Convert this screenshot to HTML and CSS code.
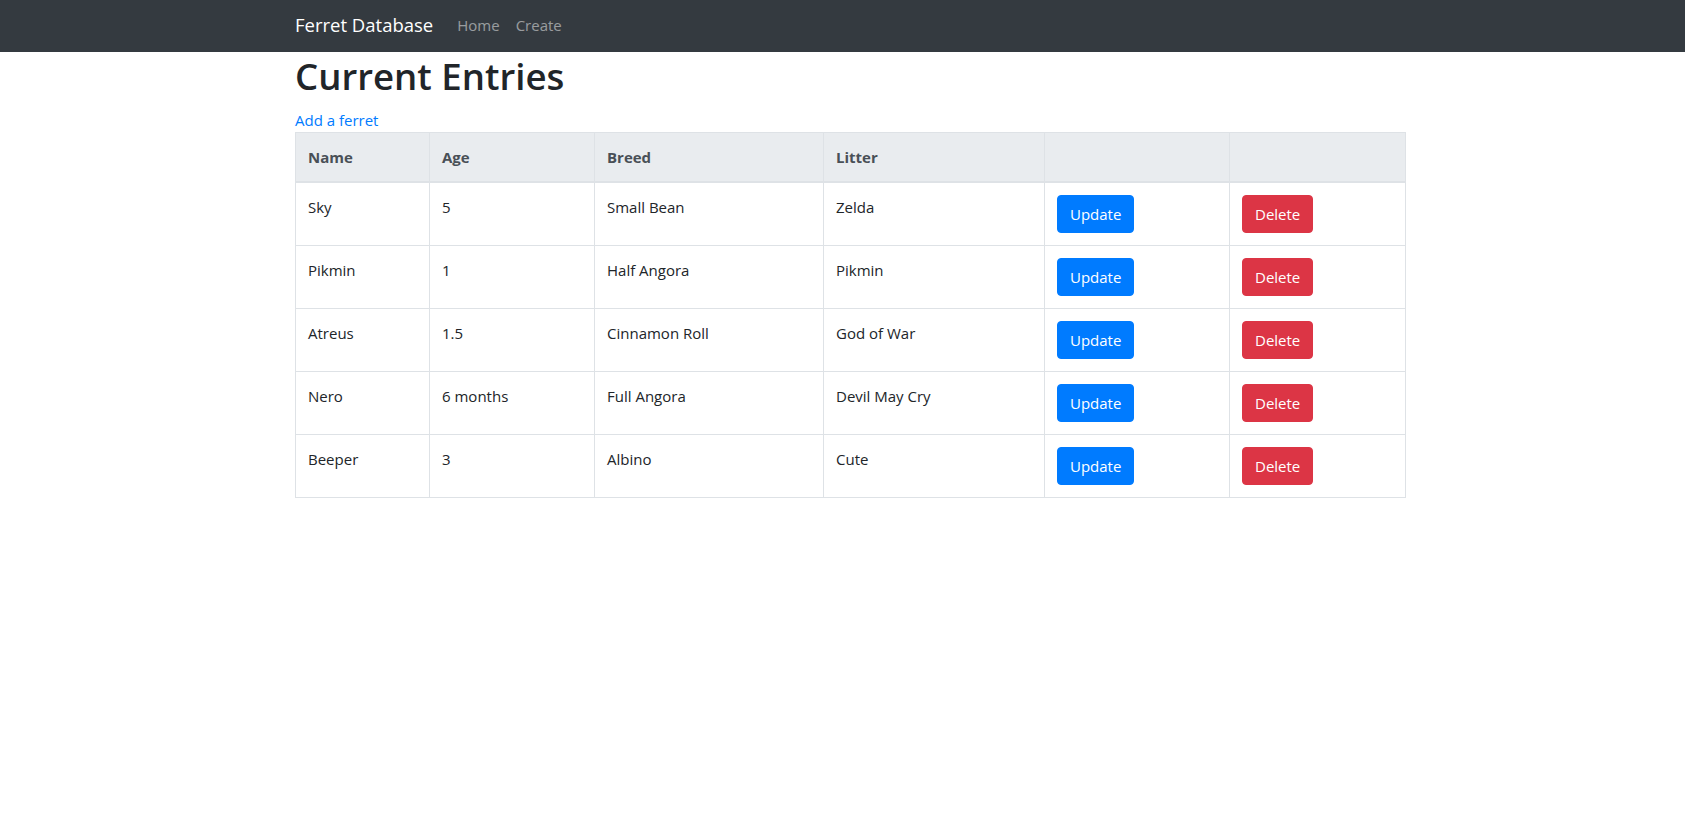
FILE: index.html
```html
<!DOCTYPE html>
<html lang="en">
<head>
<meta charset="utf-8">
<title>Ferret Database</title>
<link rel="stylesheet" href="styles.css">
</head>
<body>
<nav class="navbar">
  <div class="nav-inner">
    <a class="brand" href="#">Ferret Database</a>
    <a class="nav-link" href="#">Home</a>
    <a class="nav-link" href="#">Create</a>
  </div>
</nav>
<main class="container">
  <h1 class="title">Current Entries</h1>
  <a class="add-link" href="#">Add a ferret</a>
  <table class="table">
    <colgroup>
      <col class="c1"><col class="c2"><col class="c3"><col class="c4"><col class="c5"><col class="c6">
    </colgroup>
    <thead>
      <tr><th>Name</th><th>Age</th><th>Breed</th><th>Litter</th><th></th><th></th></tr>
    </thead>
    <tbody>
      <tr><td>Sky</td><td>5</td><td>Small Bean</td><td>Zelda</td><td><button class="btn btn-primary">Update</button></td><td><button class="btn btn-danger">Delete</button></td></tr>
      <tr><td>Pikmin</td><td>1</td><td>Half Angora</td><td>Pikmin</td><td><button class="btn btn-primary">Update</button></td><td><button class="btn btn-danger">Delete</button></td></tr>
      <tr><td>Atreus</td><td>1.5</td><td>Cinnamon Roll</td><td>God of War</td><td><button class="btn btn-primary">Update</button></td><td><button class="btn btn-danger">Delete</button></td></tr>
      <tr><td>Nero</td><td>6 months</td><td>Full Angora</td><td>Devil May Cry</td><td><button class="btn btn-primary">Update</button></td><td><button class="btn btn-danger">Delete</button></td></tr>
      <tr><td>Beeper</td><td>3</td><td>Albino</td><td>Cute</td><td><button class="btn btn-primary">Update</button></td><td><button class="btn btn-danger">Delete</button></td></tr>
    </tbody>
  </table>
</main>
</body>
</html>
```
FILE: styles.css
```css
* { box-sizing: border-box; }
html, body { margin: 0; padding: 0; }
body {
  font-family: "Open Sans", "Noto Sans", sans-serif;
  font-size: 15px;
  line-height: 24px;
  color: #212529;
  background: #fff;
}
a { text-decoration: none; }

.navbar {
  background: #343a40;
  height: 52px;
}
.nav-inner {
  width: 1125px;
  margin: 0 auto;
  padding-left: 15px;
  padding-bottom: 2px;
  height: 52px;
  display: flex;
  align-items: center;
}
.brand {
  color: #fff;
  font-size: 18.5px;
  line-height: 30px;
  margin-right: 16px;
}
.nav-link {
  color: rgba(255,255,255,0.5);
  padding: 0 8px;
  line-height: 24px;
}

.container {
  width: 1125px;
  margin: 0 auto;
  padding-left: 15px;
}
.title {
  margin: 0 0 8px;
  font-size: 36.6px;
  line-height: 48px;
  font-weight: 600;
  color: #212529;
}
.add-link {
  display: block;
  color: #007bff;
  line-height: 24px;
}

.table {
  width: 1110px;
  table-layout: fixed;
  border-collapse: collapse;
}
.c1 { width: 134px; }
.c2 { width: 165px; }
.c3 { width: 229px; }
.c4 { width: 221px; }
.c5 { width: 185px; }
.c6 { width: 176px; }
.table th, .table td {
  border: 1px solid #dee2e6;
  padding: 12px;
  text-align: left;
  vertical-align: top;
}
.table thead th {
  background: #e9ecef;
  color: #495057;
  font-weight: 700;
  border-bottom-width: 2px;
}
.btn {
  font-family: inherit;
  font-size: 15px;
  line-height: 24px;
  padding: 6px 12px;
  border: 1px solid transparent;
  border-radius: 4px;
  color: #fff;
  cursor: pointer;
}
.btn-primary { background: #007bff; border-color: #007bff; }
.btn-danger { background: #dc3545; border-color: #dc3545; }
```
